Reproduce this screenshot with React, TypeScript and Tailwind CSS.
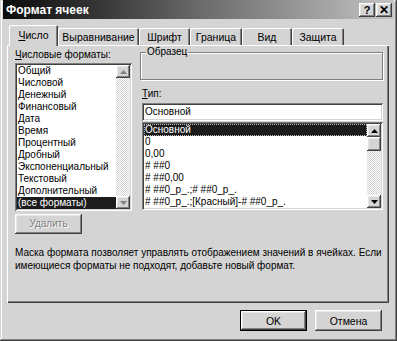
import React from "react";

const raised =
  "shadow-[inset_-1px_-1px_0_#404040,inset_1px_1px_0_#ffffff,inset_-2px_-2px_0_#808080,inset_2px_2px_0_#e6e6e6]";
const sunken =
  "shadow-[inset_1px_1px_0_#808080,inset_-1px_-1px_0_#ffffff,inset_2px_2px_0_#404040,inset_-2px_-2px_0_#d4d4d4]";

const formats = [
  "Общий",
  "Числовой",
  "Денежный",
  "Финансовый",
  "Дата",
  "Время",
  "Процентный",
  "Дробный",
  "Экспоненциальный",
  "Текстовый",
  "Дополнительный",
  "(все форматы)",
];

const types = [
  "Основной",
  "0",
  "0,00",
  "# ##0",
  "# ##0,00",
  "# ##0_р_.;# ##0_р_.",
  "# ##0_р_.;[Красный]-# ##0_р_.",
];

const tabs = [
  { label: "Выравнивание", w: "w-[81px]" },
  { label: "Шрифт", w: "w-[51px]" },
  { label: "Граница", w: "w-[52px]" },
  { label: "Вид", w: "w-[50px]" },
  { label: "Защита", w: "w-[52px]" },
];

function Arrow({ up, dim }: { up?: boolean; dim?: boolean }) {
  return (
    <svg width="7" height="4" viewBox="0 0 7 4">
      <path
        d={up ? "M3.5 0L7 4H0z" : "M0 0h7L3.5 4z"}
        fill={dim ? "#808080" : "#000000"}
      />
    </svg>
  );
}

function ScrollBar({ dim, thumb }: { dim?: boolean; thumb?: boolean }) {
  return (
    <div className="flex w-[14px] flex-col">
      <div className={`flex h-[13px] items-center justify-center bg-[#d4d4d4] ${raised}`}>
        <Arrow up dim={dim} />
      </div>
      {thumb && <div className={`h-[14px] bg-[#d4d4d4] ${raised}`} />}
      <div className="flex-1 bg-[image:repeating-conic-gradient(#ffffff_0%_25%,#d4d4d4_0%_50%)] bg-[length:2px_2px]" />
      <div className={`flex h-[13px] items-center justify-center bg-[#d4d4d4] ${raised}`}>
        <Arrow dim={dim} />
      </div>
    </div>
  );
}

export default function App() {
  return (
    <div
      className="flex h-[341px] w-[397px] flex-col overflow-hidden bg-[#d4d4d4] px-[3px] text-[10px] leading-[12px] text-black shadow-[inset_-1px_-1px_0_#404040,inset_1px_1px_0_#d4d4d4,inset_-2px_-2px_0_#808080,inset_2px_2px_0_#ffffff]"
      style={{ fontFamily: '"Liberation Sans", Arial, sans-serif' }}
    >
      {/* Title bar */}
      <div className="flex h-[19px] items-center justify-between bg-gradient-to-r from-[#0c0c0c] via-[#6a6a6a] to-[#c4c4c4] pl-[3px] pr-[2px]">
        <span className="text-[12px] font-bold text-white">Формат ячеек</span>
        <div className="flex items-center">
          <div className={`flex h-[14px] w-[16px] items-center justify-center bg-[#d4d4d4] text-[11px] font-bold ${raised}`}>
            ?
          </div>
          <div className={`ml-[1px] flex h-[14px] w-[16px] items-center justify-center bg-[#d4d4d4] text-[12px] font-bold ${raised}`}>
            ✕
          </div>
        </div>
      </div>

      {/* Tabs */}
      <div className="flex h-[26px] items-end pl-[6px] text-[10.5px]">
        <div className="relative z-10 -mb-[1px] flex h-[21px] w-[49px] items-center justify-center rounded-t-[2px] bg-[#d4d4d4] pb-[2px] shadow-[inset_1px_1px_0_#ffffff,inset_-1px_0_0_#404040,inset_-2px_0_0_#808080]">
          <span>
            <span className="underline">Ч</span>исло
          </span>
        </div>
        {tabs.map((t) => (
          <div
            key={t.label}
            className={`flex h-[17px] ${t.w} items-center justify-center rounded-t-[2px] bg-[#d4d4d4] shadow-[inset_1px_1px_0_#ffffff,inset_-1px_0_0_#404040,inset_-2px_0_0_#808080]`}
          >
            {t.label}
          </div>
        ))}
      </div>

      {/* Panel */}
      <div className="ml-[4px] flex h-[258px] w-[382px] flex-col bg-[#d4d4d4] pl-[8px] shadow-[inset_1px_1px_0_#ffffff,inset_-1px_-1px_0_#404040,inset_-2px_-2px_0_#808080]">
        <div className="flex">
          {/* Left column */}
          <div className="flex w-[117px] flex-col pt-[2px]">
            <div className="flex h-[16px] items-center">
              <span>
                <span className="underline">Ч</span>исловые форматы:
              </span>
            </div>
            <div className={`flex h-[148px] bg-white p-[2px] ${sunken}`}>
              <div className="flex-1 overflow-hidden">
                {formats.map((f, i) => (
                  <div
                    key={f}
                    className={`h-[12px] whitespace-nowrap pl-[1px] ${
                      i === formats.length - 1 ? "bg-[#1c1c1c] text-white" : ""
                    }`}
                  >
                    {f}
                  </div>
                ))}
              </div>
              <ScrollBar dim />
            </div>
            <div
              className={`mt-[3px] flex h-[20px] w-[67px] items-center justify-center bg-[#d4d4d4] text-[#808080] [text-shadow:1px_1px_0_#ffffff] ${raised}`}
            >
              Удалить
            </div>
          </div>

          {/* Right column */}
          <div className="ml-[8px] flex w-[243px] flex-col pt-[7px]">
            <div className="relative h-[28px] border border-[#808080] shadow-[inset_1px_1px_0_#ffffff,1px_1px_0_#ffffff]">
              <span className="absolute -top-[7px] left-[5px] bg-[#d4d4d4] px-[1px]">Образец</span>
            </div>
            <div className="mt-[6px] flex h-[16px] items-center pl-[2px]">
              <span>
                <span className="underline">Т</span>ип:
              </span>
            </div>
            <div className={`ml-[2px] mt-[1px] flex h-[18px] w-[241px] items-center bg-white px-[3px] ${sunken}`}>
              Основной
            </div>
            <div className={`ml-[2px] mt-[1px] flex h-[88px] w-[241px] bg-white p-[2px] ${sunken}`}>
              <div className="flex-1 overflow-hidden">
                {types.map((t, i) => (
                  <div
                    key={t}
                    className={`h-[12px] whitespace-nowrap pl-[1px] ${
                      i === 0 ? "bg-[#1c1c1c] text-white outline-1 outline-dotted outline-[#bdbdbd] -outline-offset-1" : ""
                    }`}
                  >
                    {t}
                  </div>
                ))}
              </div>
              <ScrollBar thumb />
            </div>
          </div>
        </div>

        <p className="mt-[12px] leading-[13px]">
          <span className="whitespace-nowrap">
            Маска формата позволяет управлять отображением значений в ячейках. Если
          </span>
          <br />
          <span className="whitespace-nowrap">имеющиеся форматы не подходят, добавьте новый формат.</span>
        </p>
      </div>

      {/* Buttons */}
      <div className="mt-[7px] flex justify-end gap-[8px] pr-[12px] text-[10.5px]">
        <div className="h-[21px] w-[67px] border border-black">
          <div className={`flex h-full w-full items-center justify-center bg-[#d4d4d4] ${raised}`}>OK</div>
        </div>
        <div className={`flex h-[21px] w-[67px] items-center justify-center bg-[#d4d4d4] ${raised}`}>Отмена</div>
      </div>
    </div>
  );
}
